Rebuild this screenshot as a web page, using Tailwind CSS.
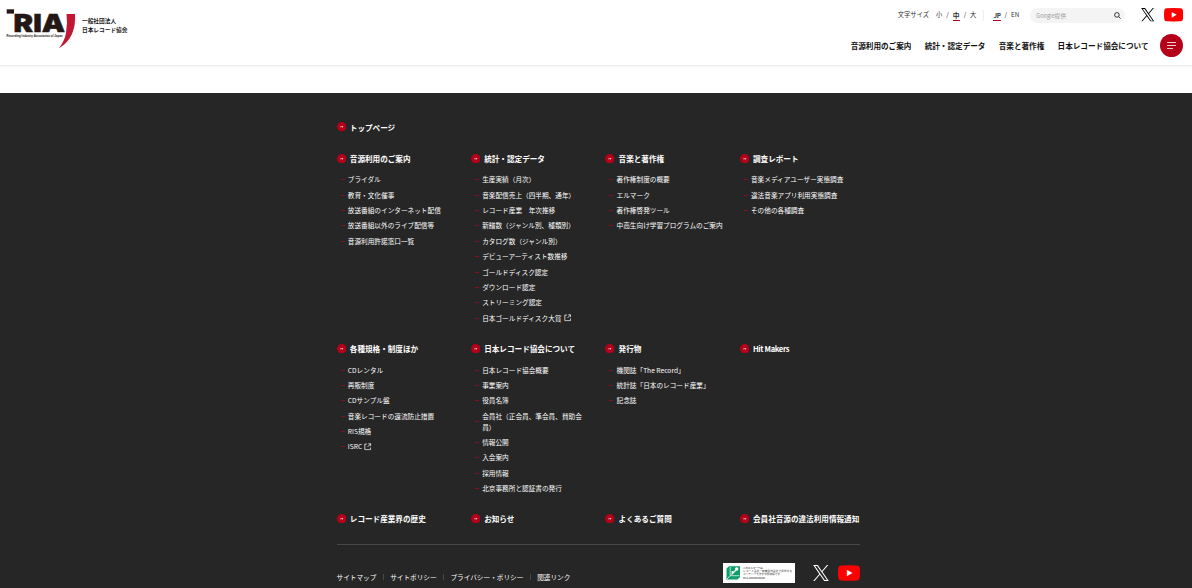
<!DOCTYPE html>
<html lang="ja">

<head>
    <meta charset="UTF-8">
    <meta name="viewport" content="width=device-width, initial-scale=1.0">
    <title>一般社団法人 日本レコード協会</title>
    <script src="https://cdn.jsdelivr.net/npm/@tailwindcss/browser@4"></script>
</head>

<body class="h-screen overflow-hidden bg-white text-[#1a1a1a] font-['Noto_Sans_CJK_JP',sans-serif]">
    <!-- Shared icons -->
    <svg class="hidden">
        <symbol id="icon-x" viewBox="0 0 1200 1227">
            <path fill="currentColor" d="M714.163 519.284L1160.89 0H1055.03L667.137 450.887L357.328 0H0L468.492 681.821L0 1226.37H105.866L515.491 750.218L842.672 1226.37H1200L714.137 519.284H714.163ZM569.165 687.828L521.697 619.934L144.011 79.6944H306.615L611.412 515.685L658.88 583.579L1055.08 1150.3H892.476L569.165 687.854V687.828Z" />
        </symbol>
        <symbol id="icon-youtube" viewBox="0 0 28 20">
            <path fill="#f00" d="M3.5.5Q14-.5 24.500 .5Q27.300 .7 27.600 3.500Q28.400 10 27.600 16.500Q27.300 19.300 24.500 19.500Q14 20.500 3.500 19.500Q.7 19.300 .4 16.500Q-.4 10 .4 3.500Q.7 .7 3.500 .5Z" />
            <path fill="#fff" d="M11.200 5.800L18.500 10L11.200 14.200Z" />
        </symbol>
        <symbol id="icon-arrow" viewBox="0 0 10 10">
            <circle cx="5" cy="5" r="5" fill="#b50019" />
            <path d="M3.300 5H6" stroke="#fff" stroke-width=".6" />
            <path d="M5.400 4.100L6.700 5L5.400 5.900Z" fill="#fff" />
        </symbol>
        <symbol id="icon-external" viewBox="0 0 14 14">
            <path d="M5.500 2H1.500V12.500H12V8.500M8 1.500H12.500V6M12.500 1.500L6.500 7.500" fill="none" stroke="currentColor" stroke-width="1.400" />
        </symbol>
    </svg>

    <!-- Header -->
    <header class="flex h-[66px] justify-between border-b border-[#ececec] pl-[6px] pr-[9px] shadow-[0_1px_2px_#0000000d]">
        <a class="flex items-start gap-[6px] pt-[8px]">
            <svg class="h-[41px] w-[70px]" viewBox="0 0 70 41">
                <rect x=".7" y="1.300" width="7.300" height="4.300" fill="#231815" />
                <text x="7.600" y="24" textLength="51.500" lengthAdjust="spacingAndGlyphs" font-family="Inter" font-size="25" font-weight="900" fill="#231815" stroke="#231815" stroke-width=".5">RIA</text>
                <text x=".6" y="29" textLength="56" lengthAdjust="spacingAndGlyphs" font-family="Liberation Sans" font-size="3.400" font-weight="700" fill="#231815">Recording Industry Association of Japan</text>
                <path d="M60.500 6H69Q69.800 17 66 26Q62 35 53 40.300Q59 32 60 25Q61.800 15 60.500 6Z" fill="#c01832" />
            </svg>
            <span class="pt-[9px] text-[5.700px] font-bold leading-[8.500px]">一般社団法人<br>日本レコード協会</span>
        </a>

        <div class="flex flex-col items-end">
            <div class="flex h-[30px] items-center text-[6.300px] text-[#333]">
                <span class="mr-[7px]">文字サイズ</span>
                <div class="flex items-center gap-[4px] border-r border-[#eee] pr-[7px]">
                    <span>小</span><span>/</span>
                    <span class="border-b border-[#b50019] pt-px text-[6.800px] font-bold leading-[9px]">中</span>
                    <span>/</span><span>大</span>
                </div>
                <div class="flex items-center gap-[4px] pl-[9px]">
                    <span class="border-b border-[#b50019] pt-px font-bold leading-[9px] tracking-[-.3px]">JP</span>
                    <span>/</span><span>EN</span>
                </div>
                <div class="ml-[11px] flex h-[15px] w-[95px] items-center justify-between rounded-full bg-[#f4f4f4] pl-[6px] pr-[4px]">
                    <span class="pt-[2px] text-[5.600px] text-[#999]">Google提供</span>
                    <svg class="size-[7px]" viewBox="0 0 14 14" fill="none" stroke="#222" stroke-width="1.800">
                        <circle cx="5.800" cy="5.800" r="4.600" />
                        <path d="M9.200 9.200L13.200 13.200" />
                    </svg>
                </div>
                <svg class="ml-[16px] h-[13.500px] w-[13.500px] text-black"><use href="#icon-x" /></svg>
                <svg class="ml-[9px] h-[13.700px] w-[19.200px]"><use href="#icon-youtube" /></svg>
            </div>
            <div class="flex h-[31px] items-center text-[7.600px] font-bold text-[#111]">
                <nav class="mr-[11.500px] flex gap-[13.300px]">
                    <a>音源利用のご案内</a>
                    <a>統計・認定データ</a>
                    <a>音楽と著作権</a>
                    <a>日本レコード協会について</a>
                </nav>
                <button class="flex size-[23px] flex-col justify-center gap-[2px] rounded-full bg-[#b50019] pl-[7px]">
                    <span class="h-px w-[9px] bg-white/80"></span>
                    <span class="h-px w-[9px] bg-white/80"></span>
                    <span class="h-px w-[6px] bg-white/80"></span>
                </button>
            </div>
        </div>
    </header>

    <!-- Footer -->
    <footer class="mt-[26.500px] h-[496px] bg-[#262626] pl-[4px] pt-[29.100px] text-white">
        <div class="mx-auto w-[523px] text-[6.650px] leading-[11px] [&_h2]:flex [&_h2]:items-center [&_h2]:gap-[3.800px] [&_h2]:whitespace-nowrap [&_h2]:text-[7.600px] [&_h2]:font-bold [&_h2]:leading-[11px] [&_h2_svg]:size-[9.500px] [&_ul]:mt-[10.300px] [&_ul]:space-y-[4.400px] [&_ul]:pl-[4px] [&_li]:flex [&_li]:items-center [&_li]:gap-[3.300px] [&_li]:before:h-px [&_li]:before:w-[4px] [&_li]:before:shrink-0 [&_li]:before:bg-[#84101d] [&_li_svg]:-ml-[1px] [&_li_svg]:size-[7.500px]">
            <h2><svg><use href="#icon-arrow" /></svg>トップページ</h2>

            <div class="mt-[20.300px] grid grid-cols-[repeat(4,134.400px)]">
                <section>
                    <h2><svg><use href="#icon-arrow" /></svg>音源利用のご案内</h2>
                    <ul>
                        <li>ブライダル</li>
                        <li>教育・文化催事</li>
                        <li>放送番組のインターネット配信</li>
                        <li>放送番組以外のライブ配信等</li>
                        <li>音源利用許諾窓口一覧</li>
                    </ul>
                </section>
                <section>
                    <h2><svg><use href="#icon-arrow" /></svg>統計・認定データ</h2>
                    <ul>
                        <li>生産実績（月次）</li>
                        <li>音楽配信売上（四半期、通年）</li>
                        <li>レコード産業　年次推移</li>
                        <li>新譜数（ジャンル別、種類別）</li>
                        <li>カタログ数（ジャンル別）</li>
                        <li>デビューアーティスト数推移</li>
                        <li>ゴールドディスク認定</li>
                        <li>ダウンロード認定</li>
                        <li>ストリーミング認定</li>
                        <li>日本ゴールドディスク大賞<svg><use href="#icon-external" /></svg></li>
                    </ul>
                </section>
                <section>
                    <h2><svg><use href="#icon-arrow" /></svg>音楽と著作権</h2>
                    <ul>
                        <li>著作権制度の概要</li>
                        <li>エルマーク</li>
                        <li>著作権啓発ツール</li>
                        <li>中高生向け学習プログラムのご案内</li>
                    </ul>
                </section>
                <section>
                    <h2><svg><use href="#icon-arrow" /></svg>調査レポート</h2>
                    <ul>
                        <li>音楽メディアユーザー実態調査</li>
                        <li>違法音楽アプリ利用実態調査</li>
                        <li>その他の各種調査</li>
                    </ul>
                </section>
            </div>

            <div class="mt-[19.500px] grid grid-cols-[repeat(4,134.400px)]">
                <section>
                    <h2><svg><use href="#icon-arrow" /></svg>各種規格・制度ほか</h2>
                    <ul>
                        <li>CDレンタル</li>
                        <li>再販制度</li>
                        <li>CDサンプル盤</li>
                        <li>音楽レコードの還流防止措置</li>
                        <li>RIS規格</li>
                        <li>ISRC<svg><use href="#icon-external" /></svg></li>
                    </ul>
                </section>
                <section>
                    <h2><svg><use href="#icon-arrow" /></svg>日本レコード協会について</h2>
                    <ul>
                        <li>日本レコード協会概要</li>
                        <li>事業案内</li>
                        <li>役員名簿</li>
                        <li>会員社（正会員、準会員、賛助会<br>員）</li>
                        <li>情報公開</li>
                        <li>入会案内</li>
                        <li>採用情報</li>
                        <li>北京事務所と認証書の発行</li>
                    </ul>
                </section>
                <section>
                    <h2><svg><use href="#icon-arrow" /></svg>発行物</h2>
                    <ul>
                        <li>機関誌「The Record」</li>
                        <li>統計誌「日本のレコード産業」</li>
                        <li>記念誌</li>
                    </ul>
                </section>
                <section>
                    <h2 class="tracking-[-.35px]"><svg><use href="#icon-arrow" /></svg>Hit Makers</h2>
                </section>
            </div>

            <div class="mt-[18.800px] grid grid-cols-[repeat(4,134.400px)]">
                <h2><svg><use href="#icon-arrow" /></svg>レコード産業界の歴史</h2>
                <h2><svg><use href="#icon-arrow" /></svg>お知らせ</h2>
                <h2><svg><use href="#icon-arrow" /></svg>よくあるご質問</h2>
                <h2><svg><use href="#icon-arrow" /></svg>会員社音源の違法利用情報通知</h2>
            </div>

            <div class="mt-[19.700px] flex justify-between border-t border-[#484848] pt-[18px]">
                <nav class="flex items-center pt-[8px] [&>a]:border-l [&>a]:border-[#484848] [&>a]:px-[6.400px] [&>a]:leading-[6px] [&>a:first-child]:border-0 [&>a:first-child]:pl-0">
                    <a>サイトマップ</a>
                    <a>サイトポリシー</a>
                    <a>プライバシー・ポリシー</a>
                    <a>関連リンク</a>
                </nav>
                <div class="flex items-center">
                    <!-- L mark banner -->
                    <svg class="h-[20px] w-[72px]" viewBox="0 0 72 20">
                        <rect width="72" height="20" fill="#fff" />
                        <path d="M3.500 5.500L6 3.300H17V14L14.500 16.500H3.500Z" fill="#0f9d6b" />
                        <path d="M7.200 4V12.700H16.500M7.200 12.700L4 16" fill="none" stroke="#fff" stroke-width=".7" />
                        <path d="M8.500 11.500L14 6" stroke="#fff" stroke-width="1.200" />
                        <circle cx="13.700" cy="6" r="1.700" fill="#fff" />
                        <circle cx="9.500" cy="9" r="1.100" fill="#fff" />
                        <g font-size="2.600" fill="#333">
                            <text x="20" y="5.500" textLength="22">このエルマークは、</text>
                            <text x="20" y="8.900" textLength="49">レコード会社・映像製作会社が提供する</text>
                            <text x="20" y="12.300" textLength="37">コンテンツを示す登録商標です</text>
                            <text x="20" y="15.700" textLength="22" lengthAdjust="spacingAndGlyphs">RIAJ00000000</text>
                        </g>
                    </svg>
                    <svg class="ml-[18px] h-[16px] w-[16px]"><use href="#icon-x" /></svg>
                    <svg class="ml-[9px] h-[16px] w-[22px]"><use href="#icon-youtube" /></svg>
                </div>
            </div>
        </div>
    </footer>
</body>

</html>
